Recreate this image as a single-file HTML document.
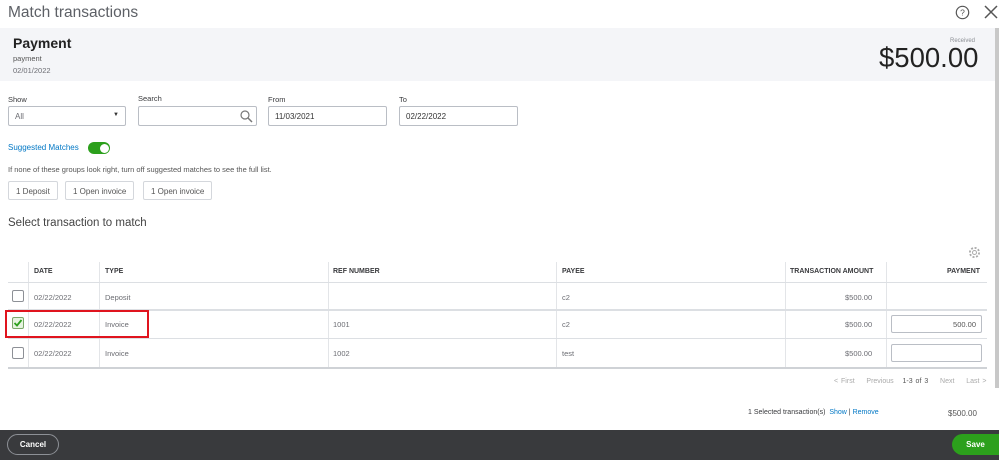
<!DOCTYPE html>
<html><head><meta charset="utf-8"><style>
*{box-sizing:border-box;margin:0;padding:0}
body{width:999px;height:460px;overflow:hidden;background:#fff;font-family:"Liberation Sans",sans-serif;color:#393a3d;position:relative}
.a{position:absolute}
.inp{position:absolute;height:20px;border:1px solid #babec5;border-radius:2px;background:#fff;font-size:8px;padding:5px 6px}
.lbl{position:absolute;font-size:7.5px;color:#393a3d}
.btn{position:absolute;top:181px;height:19px;border:1px solid #d4d7dc;border-radius:2px;font-size:8px;padding:5px 7px;color:#555}
.hl{position:absolute;left:8px;width:979px;height:1px;background:#dcdfe3}
.vl{position:absolute;top:262px;height:105px;width:1px;background:#e3e5e8}
.th{position:absolute;top:268px;font-size:7px;font-weight:bold;color:#393a3d}
.td{position:absolute;font-size:7.5px;color:#6b6c72}
.cb{position:absolute;left:12px;width:12px;height:12px;border:1px solid #8d9096;border-radius:2px;background:#fff}
</style></head><body>
<div class="a" style="left:8px;top:4px;font-size:15.5px;color:#5d6066">Match transactions</div>
<svg class="a" style="left:955px;top:5px" width="15" height="15" viewBox="0 0 15 15"><circle cx="7.5" cy="7.5" r="6.2" fill="none" stroke="#555" stroke-width="1.2"/><text x="7.5" y="10.5" font-size="8.5" text-anchor="middle" fill="#555" font-family="Liberation Sans">?</text></svg>
<svg class="a" style="left:984px;top:5px" width="14" height="14" viewBox="0 0 14 14"><path d="M1 1L13 13M13 1L1 13" stroke="#555" stroke-width="1.5"/></svg>
<div class="a" style="left:0;top:28px;width:995px;height:53px;background:#f4f5f8"></div>
<div class="a" style="left:995px;top:28px;width:4px;height:360px;background:#c8c8c8"></div>
<div class="a" style="left:13px;top:35px;font-size:14px;font-weight:bold;color:#222">Payment</div>
<div class="a" style="left:13px;top:54px;font-size:7.5px;color:#555">payment</div>
<div class="a" style="left:13px;top:66px;font-size:7.5px;color:#6b6c72">02/01/2022</div>
<div class="a" style="left:950px;top:38px;font-size:6px;color:#8d9096">Received</div>
<div class="a" style="left:879px;top:42px;font-size:27.5px;color:#222">$500.00</div>
<div class="lbl" style="left:8px;top:95px">Show</div>
<div class="lbl" style="left:138px;top:94px">Search</div>
<div class="lbl" style="left:268px;top:95px">From</div>
<div class="lbl" style="left:399px;top:95px">To</div>
<div class="inp" style="left:8px;top:106px;width:118px;color:#6b6c72">All<span style="position:absolute;right:6px;top:5px;font-size:6px;color:#333">▼</span></div>
<div class="inp" style="left:138px;top:106px;width:119px"><svg style="position:absolute;right:3px;top:2px" width="14" height="14" viewBox="0 0 14 14"><circle cx="6" cy="6" r="4" fill="none" stroke="#777" stroke-width="1.2"/><path d="M9 9L13 13" stroke="#777" stroke-width="1.5"/></svg></div>
<div class="inp" style="left:268px;top:106px;width:119px;color:#333">11/03/2021</div>
<div class="inp" style="left:399px;top:106px;width:119px;color:#333">02/22/2022</div>
<div class="a" style="left:8px;top:143px;font-size:8px;color:#0077c5">Suggested Matches</div>
<div class="a" style="left:88px;top:142px;width:22px;height:12px;border-radius:6px;background:#2ca01c"><div style="position:absolute;right:1.5px;top:1.5px;width:9px;height:9px;border-radius:50%;background:#fff"></div></div>
<div class="a" style="left:8px;top:165px;font-size:7.5px;color:#555">If none of these groups look right, turn off suggested matches to see the full list.</div>
<div class="btn" style="left:8px">1 Deposit</div>
<div class="btn" style="left:65px">1 Open invoice</div>
<div class="btn" style="left:143px">1 Open invoice</div>
<div class="a" style="left:8px;top:217px;font-size:11.5px;color:#444">Select transaction to match</div>
<svg class="a" style="left:968px;top:246px" width="13" height="13" viewBox="0 0 13 13"><circle cx="6.5" cy="6.5" r="2" fill="none" stroke="#aaa"/><circle cx="6.5" cy="6.5" r="4.6" fill="none" stroke="#aaa" stroke-dasharray="2 1.6" stroke-width="1.8"/></svg>
<div class="vl" style="left:28px"></div><div class="vl" style="left:99px"></div><div class="vl" style="left:328px"></div><div class="vl" style="left:556px"></div><div class="vl" style="left:785px"></div><div class="vl" style="left:886px"></div>
<div class="th" style="left:34px">DATE</div><div class="th" style="left:105px">TYPE</div><div class="th" style="left:333px">REF NUMBER</div><div class="th" style="left:562px">PAYEE</div><div class="th" style="left:790px">TRANSACTION AMOUNT</div><div class="th" style="left:947px">PAYMENT</div>
<div class="hl" style="top:282px"></div><div class="hl" style="top:309px;height:2px"></div><div class="hl" style="top:338px"></div><div class="hl" style="top:367px;height:2px;background:#cfd2d6"></div>
<div class="cb" style="top:290px"></div>
<div class="cb" style="top:317px;background:#e6f4e0;border-color:#7aa86a"><svg width="10" height="10" viewBox="0 0 10 10" style="position:absolute;left:0;top:0"><path d="M1.5 5L4 7.5L8.5 2" fill="none" stroke="#2ca01c" stroke-width="1.8"/></svg></div>
<div class="cb" style="top:347px"></div>
<div class="td" style="left:34px;top:293px">02/22/2022</div><div class="td" style="left:105px;top:293px">Deposit</div><div class="td" style="left:562px;top:293px">c2</div><div class="td" style="left:845px;top:293px">$500.00</div>
<div class="td" style="left:34px;top:320px">02/22/2022</div><div class="td" style="left:105px;top:320px">Invoice</div><div class="td" style="left:333px;top:320px">1001</div><div class="td" style="left:562px;top:320px">c2</div><div class="td" style="left:845px;top:320px">$500.00</div>
<div class="td" style="left:34px;top:349px">02/22/2022</div><div class="td" style="left:105px;top:349px">Invoice</div><div class="td" style="left:333px;top:349px">1002</div><div class="td" style="left:562px;top:349px">test</div><div class="td" style="left:845px;top:349px">$500.00</div>
<div class="a" style="left:891px;top:315px;width:91px;height:18px;border:1px solid #babec5;border-radius:2px;font-size:7.5px;color:#555;text-align:right;padding:4px 5px">500.00</div>
<div class="a" style="left:891px;top:344px;width:91px;height:18px;border:1px solid #babec5;border-radius:2px"></div>
<div class="a" style="left:5px;top:310px;width:144px;height:28px;border:2px solid #e0141e"></div>
<div class="a" style="left:834px;top:378px;font-size:7px;color:#aaa;word-spacing:1px">&lt; First &nbsp;&nbsp; Previous &nbsp;&nbsp;<span style="color:#555">1-3 of 3</span>&nbsp;&nbsp;&nbsp; Next &nbsp;&nbsp; Last &gt;</div>
<div class="a" style="left:748px;top:409px;font-size:7px;color:#393a3d">1 Selected transaction(s) &nbsp;<span style="color:#0077c5">Show</span> | <span style="color:#0077c5">Remove</span></div>
<div class="a" style="left:948px;top:409px;font-size:8px;color:#555">$500.00</div>
<div class="a" style="left:0;top:430px;width:999px;height:30px;background:#393a3d"></div>
<div class="a" style="left:7px;top:434px;width:52px;height:21px;border:1px solid #8d9096;border-radius:11px;color:#fff;font-size:8px;font-weight:bold;text-align:center;line-height:19px">Cancel</div>
<div class="a" style="left:952px;top:434px;width:47px;height:21px;background:#2ca01c;border-radius:11px 0 0 11px;color:#fff;font-size:8px;font-weight:bold;text-align:center;line-height:21px">Save</div>
</body></html>
